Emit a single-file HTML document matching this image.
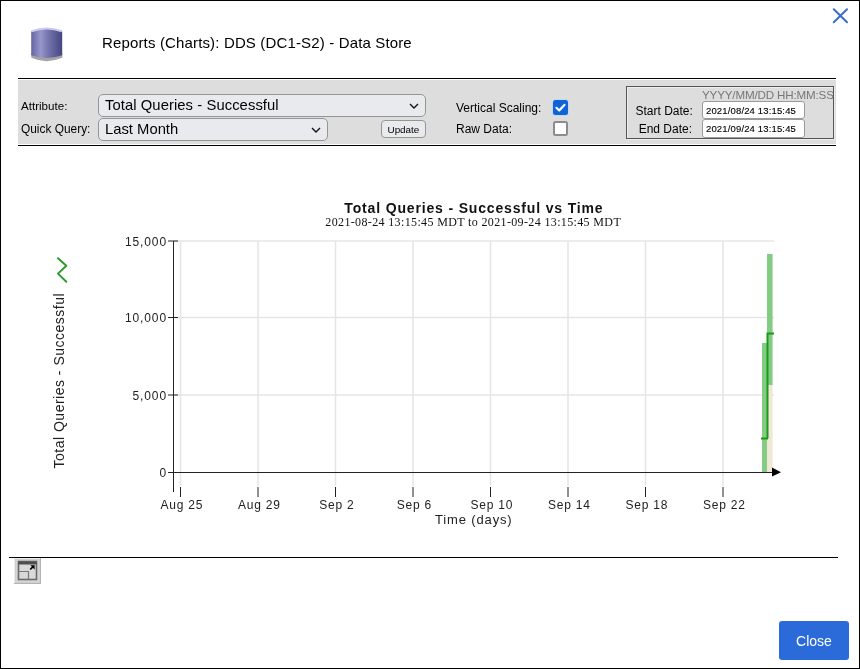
<!DOCTYPE html>
<html><head><meta charset="utf-8">
<style>
html,body{margin:0;padding:0;background:#fff;}
body{width:860px;height:669px;position:relative;overflow:hidden;-webkit-font-smoothing:antialiased;font-family:"Liberation Sans",sans-serif;color:#000;}
.abs{position:absolute;}
#frame{position:absolute;left:0;top:0;width:858px;height:667px;border:1px solid #000;}
.sel{border:1px solid #959595;border-radius:5px;background:#e9eaed;}
.inp{border:1px solid #9a9a9a;border-radius:3px;background:#fff;}
.t{position:absolute;white-space:nowrap;line-height:1;}
</style></head><body>
<div id="frame"></div>
<div id="wrap" style="position:absolute;left:0;top:0;width:860px;height:669px;will-change:transform;">

<!-- close X -->
<svg class="abs" style="left:830px;top:5px" width="22" height="22" viewBox="0 0 22 22">
  <path d="M3.8 4.3 L17 17.3 M17 4.3 L3.8 17.3" stroke="#3a6cc9" stroke-width="2" stroke-linecap="round" fill="none"/>
</svg>

<!-- db icon -->
<svg class="abs" style="left:25px;top:20px" width="45" height="48" viewBox="0 0 45 48">
  <defs>
    <linearGradient id="cyl" x1="0" x2="1" y1="0" y2="0">
      <stop offset="0" stop-color="#6464a2"/>
      <stop offset="0.3" stop-color="#9797cc"/>
      <stop offset="0.55" stop-color="#7474ae"/>
      <stop offset="1" stop-color="#45457f"/>
    </linearGradient>
    <filter id="bl" x="-20%" y="-50%" width="140%" height="200%"><feGaussianBlur stdDeviation="0.7"/></filter>
  </defs>
  <path d="M6.3 33 Q21.7 39 37.3 33 L37.3 37.8 Q21.7 44.5 6.3 37.8 Z" fill="#a4a4a4" filter="url(#bl)"/>
  <path d="M6.2 11.5 Q21.7 6 37.2 11.5 L37.2 35.3 Q21.7 40.5 6.2 35.3 Z" fill="url(#cyl)"/>
  <path d="M6.6 11.2 Q21.7 5.6 36.8 11.2" stroke="#c9c9f2" stroke-width="2" fill="none" filter="url(#bl)"/>
</svg>

<div class="t" style="left:102px;top:35px;font-size:15px;letter-spacing:0.15px;">Reports (Charts): DDS (DC1-S2) - Data Store</div>

<!-- toolbar -->
<div class="abs" style="left:18px;top:78px;width:818px;height:1px;background:#000"></div>
<div class="abs" style="left:18px;top:80px;width:818px;height:64px;background:#dddddd"></div>
<div class="abs" style="left:18px;top:145px;width:818px;height:1px;background:#000"></div>


<div class="t" style="left:21px;top:99.7px;font-size:11.6px;">Attribute:</div>
<div class="t" style="left:21px;top:124.4px;font-size:11.9px;">Quick Query:</div>

<div class="abs sel" style="left:98px;top:94px;width:326px;height:21px;"></div>
<div class="t" style="left:105px;top:98px;font-size:14.8px;letter-spacing:0.07px;">Total Queries - Successful</div>
<svg class="abs" style="left:408px;top:101px" width="12" height="10" viewBox="0 0 12 10"><path d="M2 3 L6 7 L10 3" stroke="#151515" stroke-width="1.4" fill="none"/></svg>

<div class="abs sel" style="left:98px;top:118px;width:228px;height:21px;"></div>
<div class="t" style="left:105px;top:122px;font-size:14.8px;">Last Month</div>
<svg class="abs" style="left:310px;top:125px" width="12" height="10" viewBox="0 0 12 10"><path d="M2 3 L6 7 L10 3" stroke="#151515" stroke-width="1.4" fill="none"/></svg>

<div class="abs sel" style="left:381px;top:120px;width:43px;height:16px;border-radius:4px;"></div>
<div class="t" style="left:387.5px;top:124.8px;font-size:9.9px;">Update</div>

<div class="t" style="left:456px;top:102px;font-size:12px;">Vertical Scaling:</div>
<div class="t" style="left:456px;top:123.3px;font-size:12px;">Raw Data:</div>
<div class="abs" style="left:553px;top:100px;width:15px;height:15px;border-radius:2.5px;background:#0f63d8;box-shadow:0 0 0 0.6px #b5d3ff;"></div>
<svg class="abs" style="left:553px;top:100px" width="15" height="15" viewBox="0 0 15 15"><path d="M3.4 7.8 L6.2 10.4 L11.4 4.9" stroke="#fff" stroke-width="2.2" stroke-linecap="round" stroke-linejoin="round" fill="none"/></svg>
<div class="abs" style="left:553px;top:121px;width:11px;height:11px;border-radius:2.5px;border:2px solid #8b8b90;background:#fff;"></div>

<div class="abs" style="left:626px;top:86px;width:206px;height:51px;border:1px solid #555;box-shadow:inset 1px 1px 0 #efefef, 1px 1px 0 #ececec;"></div>
<div class="t" style="left:702px;top:88.7px;font-size:11.6px;letter-spacing:-0.15px;color:#777;">YYYY/MM/DD HH:MM:SS</div>
<div class="t" style="left:635.5px;top:104.6px;font-size:12px;">Start Date:</div>
<div class="t" style="left:638.7px;top:122.6px;font-size:12px;">End Date:</div>
<div class="abs inp" style="left:702px;top:101px;width:101px;height:16px;"></div>
<div class="t" style="left:706px;top:106px;font-size:9.5px;letter-spacing:0.15px;-webkit-text-stroke:0.12px #000;">2021/08/24 13:15:45</div>
<div class="abs inp" style="left:702px;top:119px;width:101px;height:17px;"></div>
<div class="t" style="left:706px;top:124px;font-size:9.5px;letter-spacing:0.15px;-webkit-text-stroke:0.12px #000;">2021/09/24 13:15:45</div>

<!-- chart -->
<svg class="abs" style="left:0;top:0" width="860" height="669" viewBox="0 0 860 669" font-family="Liberation Sans, sans-serif">
<path d="M180.5 241V486 M258.0 241V486 M335.5 241V486 M413.0 241V486 M490.5 241V486 M568.0 241V486 M645.5 241V486 M723.0 241V486 M173 241H774 M173 317.5H774 M173 395H774" stroke="#000" stroke-opacity="0.1" stroke-width="1.6" fill="none"/>
<rect x="762" y="343" width="5" height="129.5" fill="#84cc84"/>
<rect x="767" y="254" width="5.6" height="131" fill="#84cc84"/>
<rect x="767" y="385" width="5.6" height="87.5" fill="#f1e7d5"/>
<path d="M761 438.5H768M767.5 438.5V333.5M766.5 333.5H774" stroke="#1a9a1a" stroke-width="2" fill="none"/>
<path d="M173.5 241V492 M168 472.5H773 M168 241H178 M168 317.5H178 M168 395H178 M168 472.5H178 M180.5 487V497 M258.0 487V497 M335.5 487V497 M413.0 487V497 M490.5 487V497 M568.0 487V497 M645.5 487V497 M723.0 487V497" stroke="#222" stroke-width="1" fill="none"/>
<path d="M772 467.5L781 472.3L772 476.5Z" fill="#000"/>
<text x="167" y="245.9" text-anchor="end" font-size="12" letter-spacing="0.9" fill="#222">15,000</text>
<text x="167" y="322.4" text-anchor="end" font-size="12" letter-spacing="0.9" fill="#222">10,000</text>
<text x="167" y="399.9" text-anchor="end" font-size="12" letter-spacing="0.9" fill="#222">5,000</text>
<text x="167" y="477.4" text-anchor="end" font-size="12" letter-spacing="0.9" fill="#222">0</text>
<text x="181.8" y="508.9" text-anchor="middle" font-size="12" letter-spacing="0.75" fill="#222">Aug 25</text>
<text x="259.3" y="508.9" text-anchor="middle" font-size="12" letter-spacing="0.75" fill="#222">Aug 29</text>
<text x="336.8" y="508.9" text-anchor="middle" font-size="12" letter-spacing="0.75" fill="#222">Sep 2</text>
<text x="414.3" y="508.9" text-anchor="middle" font-size="12" letter-spacing="0.75" fill="#222">Sep 6</text>
<text x="491.8" y="508.9" text-anchor="middle" font-size="12" letter-spacing="0.75" fill="#222">Sep 10</text>
<text x="569.3" y="508.9" text-anchor="middle" font-size="12" letter-spacing="0.75" fill="#222">Sep 14</text>
<text x="646.8" y="508.9" text-anchor="middle" font-size="12" letter-spacing="0.75" fill="#222">Sep 18</text>
<text x="724.3" y="508.9" text-anchor="middle" font-size="12" letter-spacing="0.75" fill="#222">Sep 22</text>
<text x="473.8" y="524" text-anchor="middle" font-size="13" letter-spacing="0.85" fill="#222">Time (days)</text>
<text x="473.9" y="212.8" text-anchor="middle" font-size="14" font-weight="bold" letter-spacing="0.84" fill="#111">Total Queries - Successful vs Time</text>
<text x="473.2" y="226.4" text-anchor="middle" font-family="Liberation Serif, serif" font-size="12" letter-spacing="0.36" fill="#111">2021-08-24 13:15:45 MDT to 2021-09-24 13:15:45 MDT</text>
<text transform="translate(64,380.7) rotate(-90)" text-anchor="middle" font-size="14" letter-spacing="0.5" fill="#222">Total Queries - Successful</text>
<path d="M58 258.2L66.3 265.8L58 273.6L66.3 281.8" stroke="#2a9a2a" stroke-width="1.9" stroke-linejoin="round" stroke-linecap="round" fill="none"/>
<path d="M9 557.5H838" stroke="#000" stroke-width="1"/>
</svg>

<div class="abs" style="left:779px;top:621px;width:70px;height:39px;border-radius:3px;background:#2b6bd9;"></div>
<div class="t" style="left:779px;top:634px;width:70px;text-align:center;font-size:14px;color:#fff;">Close</div>
<svg class="abs" style="left:14px;top:558px" width="27" height="26" viewBox="0 0 27 26">
  <rect x="0" y="0" width="27" height="26" fill="#b4b4b4"/>
  <rect x="0" y="0" width="26" height="25" fill="#eeeeee"/>
  <rect x="1" y="1" width="25" height="24" fill="#cfcfcf"/>
  <rect x="2" y="2" width="23" height="22" fill="#d6d6d6"/>
  <rect x="4.5" y="3.5" width="18" height="18" fill="#d9d9d9" stroke="#6a6a6a" stroke-width="1.6"/>
  <rect x="4.5" y="3.5" width="18" height="3" fill="#4e4e4e"/>
  <path d="M4.5 13.5H14.5V21.5" stroke="#7a7a7a" stroke-width="1.2" fill="none"/>
  <path d="M16.2 11.5L19.6 8.1" stroke="#000" stroke-width="1.6"/>
  <path d="M16.3 7.2H20.6V11.5Z" fill="#000"/>
</svg>

</div>
</body></html>
